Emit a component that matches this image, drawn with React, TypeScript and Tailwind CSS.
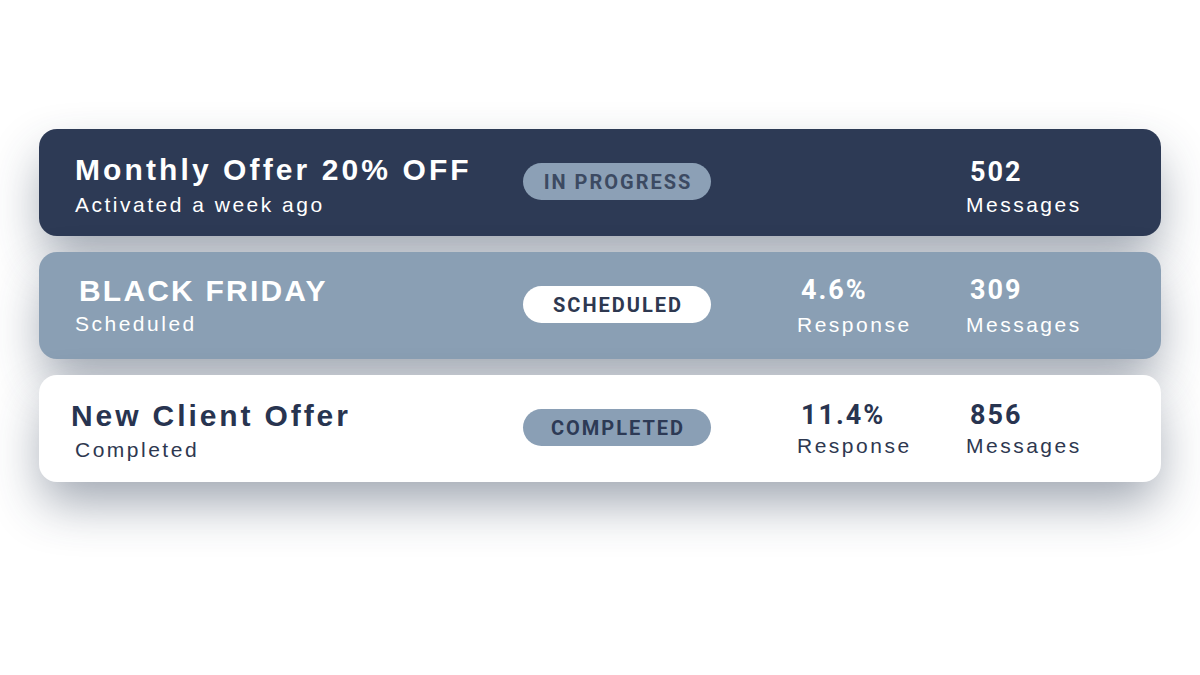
import React from "react";

type Row = {
  title: string;
  sub: string;
  badge: string;
  response?: string;
  messages: string;
  card: string;
  titleCls: string;
  subCls: string;
  pill: string;
  numCls: string;
  labelCls: string;
  titleBox: string;
  subMt: string;
  numPt: string;
  labelMt: string;
};

const rows: Row[] = [
  {
    title: "Monthly Offer 20% OFF",
    sub: "Activated a week ago",
    badge: "IN PROGRESS",
    messages: "502",
    card: "bg-[#2d3a55]",
    titleCls: "text-white tracking-[3.1px] ml-0",
    subCls: "text-white",
    pill: "bg-[#8ca0b6] text-[#3c4a62]",
    numCls: "text-white",
    labelCls: "text-white",
    titleBox: "pt-[26px]",
    subMt: "mt-[9px]",
    numPt: "pt-[30px]",
    labelMt: "mt-[8px]",
  },
  {
    title: "BLACK FRIDAY",
    sub: "Scheduled",
    badge: "SCHEDULED",
    response: "4.6%",
    messages: "309",
    card: "bg-[#8a9fb4]",
    titleCls: "text-white tracking-[2.2px] ml-[4px]",
    subCls: "text-white",
    pill: "bg-white text-[#2e3850]",
    numCls: "text-white",
    labelCls: "text-white",
    titleBox: "pt-[24px]",
    subMt: "mt-[7px]",
    numPt: "pt-[25px]",
    labelMt: "mt-[10px]",
  },
  {
    title: "New Client Offer",
    sub: "Completed",
    badge: "COMPLETED",
    response: "11.4%",
    messages: "856",
    card: "bg-white",
    titleCls: "text-[#283450] tracking-[2.9px] ml-[-4px]",
    subCls: "text-[#2e3850]",
    pill: "bg-[#8a9fb5] text-[#2d3a55]",
    numCls: "text-[#283450]",
    labelCls: "text-[#2e3850]",
    titleBox: "pt-[26px]",
    subMt: "mt-[8px]",
    numPt: "pt-[27px]",
    labelMt: "mt-[6px]",
  },
];

function Stat({
  num,
  label,
  numCls,
  labelCls,
  pt,
  mt,
}: {
  num: string;
  label: string;
  numCls: string;
  labelCls: string;
  pt: string;
  mt: string;
}) {
  return (
    <div className={`flex flex-col ${pt}`}>
      <div
        className={`${numCls} pl-[4px] text-[27px] leading-[27px] font-bold tracking-[2px]`}
        style={{ fontFamily: "Roboto, 'Liberation Sans', sans-serif" }}
      >
        {num}
      </div>
      <div
        className={`${labelCls} ${mt} text-[21px] leading-[21px] tracking-[2.5px]`}
        style={{ fontFamily: "'Liberation Sans', Arial, sans-serif" }}
      >
        {label}
      </div>
    </div>
  );
}

export default function App() {
  return (
    <div className="w-[1200px] h-[675px] bg-white overflow-hidden">
      <div className="pt-[129px] px-[39px] flex flex-col gap-[16px]">
        {rows.map((r, i) => (
          <div
            key={i}
            className={`${r.card} h-[107px] rounded-[18px] pl-[36px] grid grid-cols-[448px_274px_169px_1fr] shadow-[0_24px_50px_-4px_rgba(40,55,80,0.45)]`}
          >
            <div
              className={`flex flex-col ${r.titleBox}`}
              style={{ fontFamily: "'Liberation Sans', Arial, sans-serif" }}
            >
              <div className={`${r.titleCls} text-[30px] leading-[30px] font-bold whitespace-nowrap`}>
                {r.title}
              </div>
              <div
                className={`${r.subCls} ${r.subMt} text-[21px] leading-[21px] tracking-[2.5px] whitespace-nowrap`}
              >
                {r.sub}
              </div>
            </div>
            <div className="pt-[34px]">
              <div
                className={`${r.pill} w-[188px] h-[37px] rounded-full flex items-center justify-center pl-[2px] text-[20px] font-bold tracking-[2px]`}
                style={{ fontFamily: "Roboto, 'Liberation Sans', sans-serif" }}
              >
                {r.badge}
              </div>
            </div>
            <div>
              {r.response && (
                <Stat
                  num={r.response}
                  label="Response"
                  numCls={r.numCls}
                  labelCls={r.labelCls}
                  pt={r.numPt}
                  mt={r.labelMt}
                />
              )}
            </div>
            <div>
              <Stat
                num={r.messages}
                label="Messages"
                numCls={r.numCls}
                labelCls={r.labelCls}
                pt={r.numPt}
                mt={r.labelMt}
              />
            </div>
          </div>
        ))}
      </div>
    </div>
  );
}
